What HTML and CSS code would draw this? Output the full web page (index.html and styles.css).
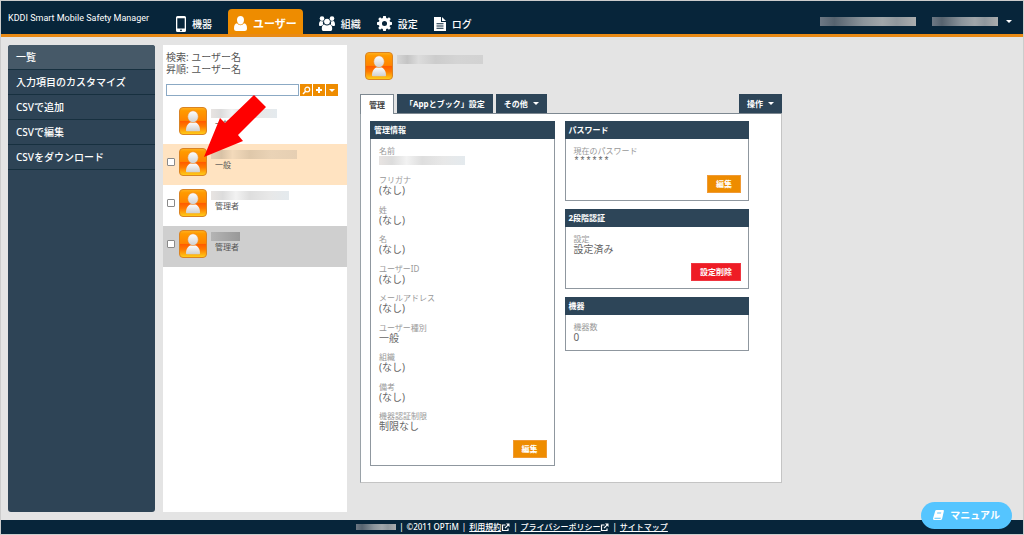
FILE: index.html
```html
<!DOCTYPE html>
<html lang="ja">
<head>
<meta charset="utf-8">
<meta name="viewport" content="width=device-width, initial-scale=1">
<title>KDDI Smart Mobile Safety Manager</title>
<link rel="stylesheet" href="styles.css">
</head>
<body>
<svg class="defs" aria-hidden="true">
  <defs>
    <linearGradient id="tile" x1="0" y1="0" x2="0" y2="1">
      <stop offset="0" stop-color="#ffb321"/><stop offset=".12" stop-color="#ff9a00"/>
      <stop offset=".48" stop-color="#ff8400"/><stop offset=".5" stop-color="#ff5a00"/>
      <stop offset=".7" stop-color="#ff7a00"/><stop offset="1" stop-color="#ffd21a"/>
    </linearGradient>
    <linearGradient id="figure" x1="0" y1="0" x2="0" y2="1">
      <stop offset="0" stop-color="#ffffff"/><stop offset="1" stop-color="#cfcfcf"/>
    </linearGradient>
    <symbol id="avatar" viewBox="0 0 28 28">
      <rect x=".5" y=".5" width="27" height="27" rx="3.5" fill="url(#tile)" stroke="#d98324"/>
      <path d="M7 23.5c0-5.5 2.800-8.500 7-8.500s7 3 7 8.500c0 .5-.3.800-.8.800H7.800c-.5 0-.8-.3-.8-.8z" fill="url(#figure)"/>
      <ellipse cx="14" cy="9.700" rx="5.300" ry="5.900" fill="url(#figure)" stroke="#f08a20" stroke-width=".6"/>
    </symbol>
    <symbol id="external" viewBox="0 0 9 9">
      <path d="M4.500 2H1.500v5.500H7V5.500M4 5.200L7.300 1.800" fill="none" stroke="#fff" stroke-width="1.200"/>
      <path d="M5 .5h3.500V4z" fill="#fff"/>
    </symbol>
  </defs>
</svg>

<div class="page">
  <header class="topbar">
    <div class="brand">KDDI Smart Mobile Safety Manager</div>
    <nav class="nav">
      <a class="nav-item" href="#">
        <svg width="10" height="16" viewBox="0 0 10 16" aria-hidden="true"><path fill="#fff" fill-rule="evenodd" d="M1.500 0h7A1.500 1.500 0 0 1 10 1.500v13A1.500 1.500 0 0 1 8.500 16h-7A1.500 1.500 0 0 1 0 14.500v-13A1.500 1.500 0 0 1 1.500 0zM1.300 2.200v10.300h7.400V2.200zM5 13.400a.9.900 0 1 0 0 1.800.9.900 0 0 0 0-1.800z"/></svg>
        機器</a>
      <a class="nav-item nav-item-active" href="#" aria-current="page">
        <svg width="13" height="15" viewBox="0 0 13 15" aria-hidden="true"><path fill="#fff" d="M6.500 0C8.700 0 10 1.700 10 3.900c0 2.400-1.500 4.600-3.500 4.600S3 6.300 3 3.900C3 1.700 4.300 0 6.500 0zM3 7.300c1 1.300 2.200 1.900 3.500 1.900S9 8.600 10 7.300c2 .4 3 2 3 5.200 0 1.700-.9 2.500-2.300 2.500H2.300C.9 15 0 14.200 0 12.500 0 9.300 1 7.700 3 7.300z"/></svg>
        ユーザー</a>
      <a class="nav-item" href="#">
        <svg width="16" height="15" viewBox="0 0 16 15" aria-hidden="true"><g fill="#fff"><circle cx="3" cy="2.600" r="2.300"/><circle cx="13" cy="2.600" r="2.300"/><path d="M0 8.800C0 6.200.7 5.200 1.800 5c1 .5 2.200.5 2.900.1-.8 1-1 2.300-.5 3.600-.8.300-1.400.8-1.900 1.300H1.200C.4 10 0 9.600 0 8.800zM16 8.800c0-2.600-.7-3.600-1.800-3.800-1 .5-2.200.5-2.900.1.8 1 1 2.300.5 3.600.8.300 1.400.8 1.900 1.300h1.100c.8 0 1.200-.4 1.200-1.200z"/><circle cx="8" cy="5.600" r="2.900"/><path d="M2.800 12.700c0-2.600.8-4 2.400-4.200 1.700 1.300 3.900 1.300 5.600 0 1.600.2 2.400 1.600 2.400 4.200 0 1.500-.7 2.300-2 2.300H4.800c-1.300 0-2-.8-2-2.300z"/></g></svg>
        組織</a>
      <a class="nav-item" href="#">
        <svg width="15" height="15" viewBox="0 0 16 16" aria-hidden="true"><path fill="#fff" fill-rule="evenodd" d="M6.600 0h2.800l.4 2.100 1.200.5L12.800 1.300l1.900 1.900L13.400 5l.5 1.200 2.100.4v2.800l-2.100.4-.5 1.200 1.300 1.800-1.900 1.900-1.800-1.300-1.200.5L9.400 16H6.600l-.4-2.100-1.200-.5-1.800 1.300-1.900-1.900L2.600 11l-.5-1.200L0 9.400V6.600l2.100-.4L2.600 5 1.300 3.200l1.900-1.900L5 2.600l1.200-.5zM8 5.300a2.700 2.700 0 1 0 0 5.400 2.700 2.700 0 0 0 0-5.400z"/></svg>
        設定</a>
      <a class="nav-item" href="#">
        <svg width="12" height="14" viewBox="0 0 12 14" aria-hidden="true"><path fill="#fff" fill-rule="evenodd" d="M0 0h7v5h5v9H0zM8 0l4 4H8zM2.500 6.200v1h7v-1zm0 2.300v1h7v-1zm0 2.300v1h7v-1z"/></svg>
        ログ</a>
    </nav>
    <div class="account">
      <span class="blur blur-light blur-company"></span>
      <span class="blur blur-light blur-login"></span>
      <button class="caret-button" type="button" aria-label="アカウントメニュー"><span class="caret"></span></button>
    </div>
  </header>

  <div class="content">
    <nav class="sidebar">
      <a class="side-item side-item-active" href="#">一覧</a>
      <a class="side-item" href="#">入力項目のカスタマイズ</a>
      <a class="side-item" href="#">CSVで追加</a>
      <a class="side-item" href="#">CSVで編集</a>
      <a class="side-item" href="#">CSVをダウンロード</a>
    </nav>

    <section class="users">
      <p class="criteria">検索: ユーザー名<br>昇順: ユーザー名</p>
      <form class="search">
        <input class="search-box" type="text" aria-label="検索">
        <button class="tool" type="button" aria-label="検索する"><svg width="9" height="9" viewBox="0 0 9 9" aria-hidden="true"><circle cx="5.300" cy="3.500" r="2.400" fill="none" stroke="#fff" stroke-width="1.200"/><path d="M3.600 5.200L1 8" stroke="#fff" stroke-width="1.500"/></svg></button>
        <button class="tool" type="button" aria-label="追加"><svg width="8" height="8" viewBox="0 0 8 8" aria-hidden="true"><path d="M4 1v6M1 4h6" stroke="#fff" stroke-width="2"/></svg></button>
        <button class="tool" type="button" aria-label="並べ替え"><span class="caret"></span></button>
      </form>
      <ul class="user-list">
        <li class="user">
          <span></span>
          <svg class="avatar" aria-hidden="true"><use href="#avatar"/></svg>
          <div class="user-text"><span class="blur blur-faint blur-name-short"></span><span class="role">一般</span></div>
        </li>
        <li class="user user-selected">
          <input class="pick" type="checkbox" aria-label="ユーザーを選択">
          <svg class="avatar" aria-hidden="true"><use href="#avatar"/></svg>
          <div class="user-text"><span class="blur blur-warm blur-name-long"></span><span class="role">一般</span></div>
        </li>
        <li class="user">
          <input class="pick" type="checkbox" aria-label="管理者を選択">
          <svg class="avatar" aria-hidden="true"><use href="#avatar"/></svg>
          <div class="user-text"><span class="blur blur-faint blur-name-mid"></span><span class="role">管理者</span></div>
        </li>
        <li class="user user-self">
          <input class="pick" type="checkbox" aria-label="自分を選択">
          <svg class="avatar" aria-hidden="true"><use href="#avatar"/></svg>
          <div class="user-text"><span class="blur blur-dark blur-name-tiny"></span><span class="role">管理者</span></div>
        </li>
      </ul>
      <svg class="pointer" viewBox="0 0 64 64" aria-hidden="true"><path fill="#f00" d="M1 63L17 24l5 5L51 1l12 12-28 28 5 6z"/></svg>
    </section>

    <main class="detail">
      <div class="profile">
        <svg class="avatar" aria-hidden="true"><use href="#avatar"/></svg>
        <span class="blur blur-gray blur-name-long"></span>
      </div>
      <div class="tabs">
        <button class="tab tab-active" type="button">管理</button>
        <button class="tab" type="button">「Appとブック」設定</button>
        <button class="tab" type="button">その他 <span class="caret"></span></button>
        <button class="tab tab-actions" type="button">操作 <span class="caret"></span></button>
      </div>
      <div class="panel">
        <section class="card">
          <h2 class="card-title">管理情報</h2>
          <div class="card-body">
            <dl class="fields fields-long">
              <div><dt>名前</dt><dd><span class="blur blur-faint blur-name-long"></span></dd></div>
              <div><dt>フリガナ</dt><dd>(なし)</dd></div>
              <div><dt>姓</dt><dd>(なし)</dd></div>
              <div><dt>名</dt><dd>(なし)</dd></div>
              <div><dt>ユーザーID</dt><dd>(なし)</dd></div>
              <div><dt>メールアドレス</dt><dd>(なし)</dd></div>
              <div><dt>ユーザー種別</dt><dd>一般</dd></div>
              <div><dt>組織</dt><dd>(なし)</dd></div>
              <div><dt>備考</dt><dd>(なし)</dd></div>
              <div><dt>機器認証制限</dt><dd>制限なし</dd></div>
            </dl>
            <button class="button" type="button">編集</button>
          </div>
        </section>
        <div class="column">
          <section class="card">
            <h2 class="card-title">パスワード</h2>
            <div class="card-body">
              <dl class="fields"><div><dt>現在のパスワード</dt><dd class="stars">******</dd></div></dl>
              <button class="button" type="button">編集</button>
            </div>
          </section>
          <section class="card">
            <h2 class="card-title">2段階認証</h2>
            <div class="card-body">
              <dl class="fields"><div><dt>設定</dt><dd>設定済み</dd></div></dl>
              <button class="button button-danger" type="button">設定削除</button>
            </div>
          </section>
          <section class="card">
            <h2 class="card-title">機器</h2>
            <div class="card-body">
              <dl class="fields"><div><dt>機器数</dt><dd>0</dd></div></dl>
            </div>
          </section>
        </div>
      </div>
    </main>
  </div>

  <footer class="footer">
    <span class="blur blur-light blur-version"></span>
    <span>|</span><span>©2011 OPTiM</span><span>|</span>
    <a href="#">利用規約<svg width="9" height="9" aria-hidden="true"><use href="#external"/></svg></a>
    <span>|</span>
    <a href="#">プライバシーポリシー<svg width="9" height="9" aria-hidden="true"><use href="#external"/></svg></a>
    <span>|</span>
    <a href="#">サイトマップ</a>
  </footer>
</div>

<a class="manual" href="#">
  <svg width="11" height="10" viewBox="0 0 11 10" aria-hidden="true"><path fill="#fff" fill-rule="evenodd" d="M3.500 0H10c.7 0 1.100.5.900 1.100L9.200 8.500C9 9.400 8.500 10 7.600 10H1.500C.5 10-.2 9.200.1 8.300L2.200 1C2.400.3 2.800 0 3.500 0zM4.300 2.600l-.3.800h4l.3-.8zM1.700 7.800c-.4 0-.4 1 0 1h5.600c.3 0 .5-.4.6-1z"/></svg>
  マニュアル</a>
</body>
</html>
```

FILE: styles.css
```css
* {
  box-sizing: border-box;
}

body {
  margin: 0;
  color: #555;
  font-family: "Noto Sans", "Noto Sans CJK JP", sans-serif;
  font-size: 10px;
  line-height: 12px;
}

a {
  color: inherit;
  text-decoration: none;
}

button {
  border: 0;
  margin: 0;
  padding: 0;
  color: #fff;
  font: inherit;
}

.defs {
  position: absolute;
  width: 0;
  height: 0;
}

.page {
  display: flex;
  flex-direction: column;
  min-height: 100vh;
  border: 1px solid #ccc;
  background: #e4e4e4;
}

/* Header */

.topbar {
  display: flex;
  align-items: stretch;
  height: 36px;
  border-bottom: 3px solid #e98a15;
  background: #07253a;
  color: #fff;
}

.brand {
  flex: 0 0 175px;
  padding: 11px 0 0 7px;
  font-family: Roboto, sans-serif;
  font-size: 9px;
  white-space: nowrap;
}

.nav {
  display: flex;
  gap: 16px;
  padding-top: 8px;
  font-weight: 500;
}

.nav-item {
  display: flex;
  align-items: center;
  gap: 6px;
  padding-top: 4px;
  white-space: nowrap;
}

.nav-item-active {
  padding: 4px 6px 0;
  border-radius: 4px 4px 0 0;
  background: #ee8c00;
  font-size: 11px;
  font-weight: 700;
}

.account {
  display: flex;
  align-items: center;
  gap: 16px;
  margin-left: auto;
  padding: 7px 11px 0 0;
}

.caret-button {
  display: flex;
  margin-left: -8px;
  background: none;
}

.caret {
  display: inline-block;
  border: 3px solid transparent;
  border-top-color: #fff;
  border-bottom: 0;
}

/* Obscured names */

.blur {
  display: block;
  height: 9px;
}

.blur-light {
  background: linear-gradient(90deg, #6d7884, #56636f 15%, #8b949b 45%, #a0a6aa 65%, #8f979d 80%, #abadae);
}

.blur-gray {
  background: linear-gradient(90deg, #d6d6d6, #c4c4c4 12%, #dcdcdc 25%, #cccccc 45%, #d4d4d4 70%, #d2d2d2);
}

.blur-faint {
  background: linear-gradient(90deg, #e8e4e2, #dcdcdc 15%, #f2f2f2 32%, #dedede 50%, #e8e8e8 75%, #e4eaee);
}

.blur-warm {
  background: linear-gradient(90deg, #e5d0b5, #d8c2a6 12%, #f3dabb 25%, #dfc8aa 45%, #ead3b6 70%, #e6cfb3);
}

.blur-dark {
  background: linear-gradient(90deg, #b4b4b4, #a6a6a6 50%, #999);
}

.blur-company { width: 96px; }
.blur-login { width: 66px; }
.blur-version { width: 40px; height: 6px; }
.blur-name-tiny { width: 29px; }
.blur-name-short { width: 66px; }
.blur-name-mid { width: 78px; }
.blur-name-long { width: 86px; }

/* Columns */

.content {
  display: flex;
  flex: 1;
  gap: 8px;
  padding: 8px 7px;
}

.sidebar {
  flex: 0 0 147px;
  border-radius: 3px;
  background: #2e4456;
  color: #fff;
  font-weight: 500;
  overflow: hidden;
}

.side-item {
  display: block;
  padding: 6px 8px;
  border-bottom: 1px solid #17303f;
}

.side-item-active {
  background: #465968;
}

.users {
  position: relative;
  flex: 0 0 184px;
  min-width: 0;
  padding-top: 6px;
  background: #fff;
}

.criteria {
  margin: 0 3px 9px;
}

.search {
  display: flex;
  gap: 1px;
  margin: 0 9px 7px 3px;
}

.search-box {
  flex: 1;
  min-width: 0;
  height: 12px;
  border: 1px solid #8ba9c4;
  padding: 0 2px;
  font: inherit;
}

.tool {
  display: flex;
  flex: none;
  align-items: center;
  justify-content: center;
  width: 12px;
  height: 12px;
  background: #ee8c00;
}

.user-list {
  margin: 0;
  padding: 0;
  list-style: none;
}

.user {
  display: grid;
  grid-template-columns: 8px 28px 1fr;
  gap: 4px;
  height: 41px;
  padding: 4px;
}

.user-selected {
  background: #ffe3c1;
}

.user-self {
  background: #cfcfcf;
}

.pick {
  appearance: none;
  width: 8px;
  height: 8px;
  margin: 10px 0 0;
  border: 1px solid #8a8a8a;
  border-radius: 1px;
  background: #fff;
}

.pick:checked {
  background: #ee8c00;
}

.avatar {
  display: block;
  flex: none;
  width: 28px;
  height: 28px;
}

.user-text {
  padding-top: 2px;
}

.role {
  display: block;
  padding-left: 4px;
  font-size: 8px;
}

/* Callout arrow over the list */

.pointer {
  position: absolute;
  top: 49px;
  left: 40px;
  width: 64px;
  height: 64px;
}

/* Detail */

.detail {
  flex: 1;
  max-width: 427px;
  padding: 7px 0 0 5px;
}

.profile {
  display: flex;
  gap: 4px;
  padding: 0 5px 14px;
}

.profile .blur {
  margin-top: 3px;
}

.tabs {
  display: flex;
  gap: 3px;
}

.tab {
  display: flex;
  align-items: center;
  gap: 5px;
  height: 19px;
  padding: 0 8px;
  background: #2d4558;
  font-size: 8px;
  font-weight: 700;
  white-space: nowrap;
}

.tab-active {
  position: relative;
  height: 20px;
  margin-bottom: -1px;
  border: 1px solid #7d8891;
  border-bottom: 0;
  background: #fff;
  color: #444;
}

.tab-actions {
  margin-left: auto;
}

.panel {
  display: grid;
  grid-template-columns: 1fr 1fr;
  align-items: start;
  gap: 10px;
  padding: 7px 32px 16px 9px;
  border: 1px solid #c4c4c4;
  border-top-color: #7d8891;
  border-left-color: #9aa2a8;
  background: #fff;
}

.column {
  display: grid;
  gap: 8px;
}

.card {
  border: 1px solid #8f979f;
  border-top: 0;
}

.card-title {
  margin: 0 -1px;
  padding: 3px 4px;
  background: #2d4558;
  color: #fff;
  font-size: 8px;
  font-weight: 700;
}

.card-body {
  display: flex;
  flex-direction: column;
  align-items: flex-start;
  gap: 8px;
  padding: 7px 7px 7px 8px;
}

.fields {
  margin: 0;
}

.fields-long {
  display: grid;
  align-content: space-between;
  min-height: 286px;
}

dt {
  color: #999;
  font-size: 8px;
  line-height: 10px;
}

dd {
  min-height: 11px;
  margin: 0;
  color: #666;
  line-height: 11px;
}

.stars {
  font-family: "Liberation Mono", monospace;
}

.button {
  align-self: flex-end;
  padding: 2px 8px;
  border: 1px solid #f09a35;
  background: #ee8c00;
  font-size: 8px;
  font-weight: 700;
}

.button-danger {
  border-color: #f03540;
  background: #ee1c25;
}

/* Footer */

.footer {
  display: flex;
  align-items: center;
  justify-content: center;
  gap: 3px;
  height: 14px;
  background: #07253a;
  color: #fff;
  font-size: 8px;
  font-weight: 500;
}

.footer a {
  text-decoration: underline;
}

.footer svg {
  vertical-align: middle;
}

.manual {
  position: fixed;
  right: 12px;
  bottom: 6px;
  display: flex;
  align-items: center;
  gap: 6px;
  padding: 7px 12px 8px;
  border-radius: 14px;
  background: #55c5ff;
  color: #fff;
  font-weight: 700;
}
```
